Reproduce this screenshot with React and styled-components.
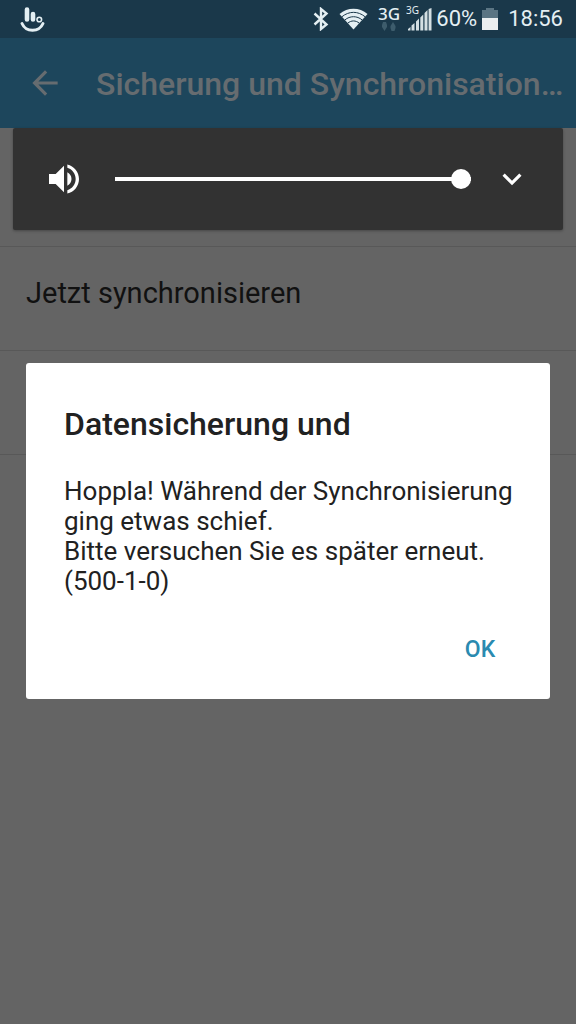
import React, { useState } from "react";
import styled, { createGlobalStyle } from "styled-components";

const GlobalStyle = createGlobalStyle`
  * {
    box-sizing: border-box;
  }

  body {
    margin: 0;
    background: #646464;
    font-family: Roboto, "Liberation Sans", sans-serif;
  }

  button {
    border: 0;
    padding: 0;
    background: none;
    font-family: inherit;
    cursor: pointer;
  }

  svg {
    display: block;
    flex: none;
  }
`;

const Screen = styled.div`
  position: relative;
  min-height: 100vh;
  overflow: hidden;
`;

const StatusBar = styled.div`
  display: flex;
  align-items: center;
  justify-content: space-between;
  height: 38px;
  padding: 0 13px 0 20px;
  background: #1a384a;
  color: #e4eff3;
`;

const StatusGroup = styled.div`
  display: flex;
  align-items: center;
`;

const StatusText = styled.span`
  margin-left: ${(props) => props.$gap}px;
  font-size: 22px;
  line-height: 40px;
`;

const StatusIcon = styled.svg`
  margin-left: ${(props) => props.$gap || 0}px;
`;

const AppBar = styled.header`
  display: flex;
  align-items: center;
  height: 90px;
  padding: 0 12px 0 26px;
  background: #1d465c;
  color: #666c70;
`;

const BackButton = styled.button`
  color: inherit;
`;

const AppTitle = styled.h1`
  flex: 1;
  min-width: 0;
  margin: 2px 0 0 32px;
  font-size: 32px;
  font-weight: 500;
  line-height: 40px;
  white-space: nowrap;
`;

const List = styled.ul`
  margin: 0;
  padding: 0;
  list-style: none;
`;

const ListItem = styled.li`
  display: flex;
  align-items: center;
  height: ${(props) => props.$height || 104}px;
  padding: 0 26px 12px;
  border-bottom: 1px solid #585858;
  color: #111111;
  font-size: 29px;
  line-height: 36px;
`;

const VolumePanel = styled.div`
  position: absolute;
  top: 128px;
  left: 13px;
  right: 13px;
  display: flex;
  align-items: center;
  height: 102px;
  padding: 0 32px 0 31px;
  border-radius: 2px;
  background: #323232;
  color: #ffffff;
  box-shadow: 0 1px 3px rgba(0, 0, 0, 0.3);
`;

const VolumeSlider = styled.input`
  flex: 1;
  min-width: 0;
  height: 20px;
  margin: 0 22px 0 31px;
  background: linear-gradient(#ffffff, #ffffff) center / 100% 4px no-repeat;
  appearance: none;

  &::-webkit-slider-thumb {
    width: 20px;
    height: 20px;
    border-radius: 50%;
    background: #ffffff;
    appearance: none;
  }
`;

const ExpandButton = styled.button`
  color: inherit;
`;

const Overlay = styled.div`
  position: absolute;
  top: 38px;
  right: 0;
  bottom: 0;
  left: 0;
  display: flex;
  align-items: center;
  padding: 0 26px;
  pointer-events: none;
`;

const Dialog = styled.div`
  width: 100%;
  padding: 40px 30px 22px 38px;
  border-radius: 3px;
  background: #ffffff;
  color: #212121;
  pointer-events: auto;
`;

const DialogTitle = styled.h2`
  margin: 0 0 31px;
  font-size: 32px;
  font-weight: 500;
  line-height: 42px;
`;

const DialogText = styled.p`
  margin: 0;
  font-size: 26px;
  line-height: 30px;
`;

const DialogActions = styled.div`
  display: flex;
  justify-content: flex-end;
  margin-top: 25px;
  padding-right: 8px;
`;

const DialogButton = styled.button`
  min-width: 64px;
  height: 56px;
  color: #2a8ab0;
  font-size: 23px;
  font-weight: 500;
`;

function TouchPalIcon() {
  return (
    <svg width="25" height="28" viewBox="0 0 25 28" fill="none" stroke="#e4eff3">
      <path d="M7 4.500v10M13 9v5.500" strokeWidth="4.600" strokeLinecap="round" />
      <circle cx="19.300" cy="14.500" r="2.300" strokeWidth="1.600" />
      <path d="M2 18.500c4 9 17 9 21 0" strokeWidth="3" strokeLinecap="round" />
    </svg>
  );
}

function BluetoothIcon() {
  return (
    <svg width="16" height="24" viewBox="0 0 16 24" fill="none" stroke="#e4eff3" strokeWidth="2.400">
      <path d="M1.500 6.500 13.500 17.500 8 22V2L13.500 6.500 1.500 17.500" />
    </svg>
  );
}

function WifiIcon() {
  return (
    <StatusIcon $gap={10} width="29" height="22" viewBox="0 0 29 22">
      <path d="M.5 6C8.500-1 20.500-1 28.500 6L14.500 21.500z" fill="#e4eff3" />
      <g fill="none" stroke="#1a384a" strokeWidth="1">
        <path d="M3 8.700c7-5.800 16-5.800 23 0" />
        <path d="M5.800 12c5.200-4.400 12.200-4.400 17.400 0" />
        <path d="M8.700 15.200c3.500-3 8.100-3 11.600 0" />
      </g>
    </StatusIcon>
  );
}

function DataIcon() {
  return (
    <StatusIcon $gap={10} width="24" height="38" viewBox="0 0 24 38">
      <text x="0" y="20" fontSize="17" fontWeight="500" fontFamily="Noto Sans, sans-serif" fill="#e4eff3">
        3G
      </text>
      <g fill="#3d5c6c">
        <path d="M4 25l1-3h3l1 3v2l-2.500 4L4 27z" />
        <path d="M12.500 26l2.500-4 2.500 4v2l-1 3h-3l-1-3z" />
      </g>
    </StatusIcon>
  );
}

function SignalIcon() {
  return (
    <StatusIcon $gap={4} width="26" height="38" viewBox="0 0 26 38">
      <path
        d="M2 30.500V29l2.500-2v3.500zM5.500 30.500v-5l3-2.500v7.500zM10 30.500v-9l3-3v12zM14.300 30.500V17.500l3-3v16zM18.500 30.500V13l3-3v20.500zM22.600 30.500V9l2.900-1v22.500z"
        fill="#d4dfe3"
      />
      <text x="0" y="14" fontSize="10" fontFamily="Noto Sans, sans-serif" fill="#e4eff3">
        3G
      </text>
    </StatusIcon>
  );
}

function BatteryIcon() {
  return (
    <StatusIcon $gap={5} width="16" height="24" viewBox="0 0 16 24">
      <path d="M0 3h4V1h8v2h4v9H0z" fill="#5b7583" />
      <path d="M0 11h16v12H0z" fill="#eceff0" />
    </StatusIcon>
  );
}

function App() {
  const [volume, setVolume] = useState(100);
  const [open, setOpen] = useState(true);

  return (
    <Screen>
      <GlobalStyle />
      <StatusBar>
        <TouchPalIcon />
        <StatusGroup>
          <BluetoothIcon />
          <WifiIcon />
          <DataIcon />
          <SignalIcon />
          <StatusText $gap={4}>60%</StatusText>
          <BatteryIcon />
          <StatusText $gap={10}>18:56</StatusText>
        </StatusGroup>
      </StatusBar>

      <AppBar>
        <BackButton aria-label="Zurück">
          <svg width="38" height="38" viewBox="0 0 24 24" fill="currentColor">
            <path d="M20 11H7.830l5.590-5.590L12 4l-8 8 8 8 1.410-1.410L7.830 13H20v-2z" />
          </svg>
        </BackButton>
        <AppTitle>Sicherung und Synchronisation…</AppTitle>
      </AppBar>

      <List>
        <ListItem $height={119} />
        <ListItem>Jetzt synchronisieren</ListItem>
        <ListItem />
      </List>

      <VolumePanel>
        <svg width="40" height="40" viewBox="0 0 24 24" fill="currentColor">
          <path d="M3 9v6h4l5 5V4L7 9H3zm13.500 3c0-1.770-1.020-3.290-2.500-4.030v8.050c1.480-.73 2.500-2.250 2.500-4.020zM14 3.230v2.060c2.890.86 5 3.540 5 6.710s-2.110 5.850-5 6.710v2.060c4.010-.91 7-4.490 7-8.770s-2.990-7.860-7-8.770z" />
        </svg>
        <VolumeSlider
          type="range"
          aria-label="Lautstärke"
          value={volume}
          onChange={(e) => setVolume(e.target.value)}
        />
        <ExpandButton aria-label="Mehr anzeigen">
          <svg width="38" height="38" viewBox="0 0 24 24" fill="currentColor">
            <path d="M16.590 8.590L12 13.170 7.410 8.590 6 10l6 6 6-6z" />
          </svg>
        </ExpandButton>
      </VolumePanel>

      {open && (
        <Overlay>
          <Dialog role="alertdialog" aria-labelledby="dialog-title">
            <DialogTitle id="dialog-title">Datensicherung und</DialogTitle>
            <DialogText>
              Hoppla! Während der Synchronisierung ging etwas schief.
              <br />
              Bitte versuchen Sie es später erneut. (500-1-0)
            </DialogText>
            <DialogActions>
              <DialogButton onClick={() => setOpen(false)}>OK</DialogButton>
            </DialogActions>
          </Dialog>
        </Overlay>
      )}
    </Screen>
  );
}

export default App;
